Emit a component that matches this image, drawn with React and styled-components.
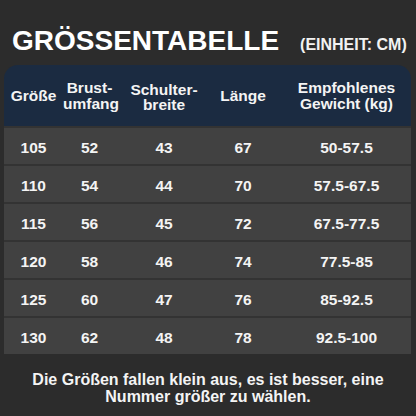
import React from 'react'
import styled, { createGlobalStyle } from 'styled-components';

const GlobalStyle = createGlobalStyle`
  html, body {
    margin: 0;
    padding: 0;
    background: #2c2c2c;
  }
  * { box-sizing: border-box; }
`;

const Page = styled.div`
  width: 416px;
  height: 416px;
  padding-top: 25px;
  background: #2c2c2c;
  color: #f4f4f4;
  font-family: "Liberation Sans", Arial, sans-serif;
  font-weight: bold;
  overflow: hidden;
`;

const TitleRow = styled.div`
  display: flex;
  align-items: baseline;
  gap: 21px;
  padding-left: 12px;
  height: 32px;
`;

const Title = styled.h1`
  margin: 0;
  font-size: 28px;
  line-height: 32px;
  font-weight: bold;
  color: #ffffff;
`;

const Unit = styled.span`
  font-size: 16px;
  color: #f2f2f2;
`;

const Table = styled.div`
  margin: 8px 5px 0 4px;
  display: flex;
  flex-direction: column;
`;

const Columns = styled.div`
  display: grid;
  grid-template-columns: 59px 53px 96px 62px 1fr;
  align-items: center;
  text-align: center;
  & > div:last-child {
    padding-left: 8px;
  }
`;

const Head = styled(Columns)`
  height: 61px;
  background: #1b2b41;
  border-radius: 14px 14px 0 0;
  font-size: 15.5px;
  line-height: 15.5px;
`;

const HeadCell = styled.div`
  padding-top: ${({ $drop }) => $drop || 0}px;
`;

const Row = styled(Columns)`
  height: 38px;
  padding-top: 3px;
  border-top: 2px solid #333333;
  background: #414141;
  font-size: 15.5px;
`;

const Note = styled.p`
  margin: 17px 0 0;
  text-align: center;
  font-size: 16px;
  line-height: 17px;
  color: #f4f4f4;
`;

const rows = [
  ['105', '52', '43', '67', '50-57.5'],
  ['110', '54', '44', '70', '57.5-67.5'],
  ['115', '56', '45', '72', '67.5-77.5'],
  ['120', '58', '46', '74', '77.5-85'],
  ['125', '60', '47', '76', '85-92.5'],
  ['130', '62', '48', '78', '92.5-100'],
];

const App = () => {
  return (
    <Page>
      <GlobalStyle />
      <TitleRow>
        <Title>GRÖSSENTABELLE</Title>
        <Unit>(EINHEIT: CM)</Unit>
      </TitleRow>
      <Table>
        <Head>
          <HeadCell>Größe</HeadCell>
          <HeadCell>Brust-<br />umfang</HeadCell>
          <HeadCell $drop={3}>Schulter-<br />breite</HeadCell>
          <HeadCell>Länge</HeadCell>
          <HeadCell>Empfohlenes<br />Gewicht (kg)</HeadCell>
        </Head>
        {rows.map((r) => (
          <Row key={r[0]}>
            {r.map((v, i) => (
              <div key={i}>{v}</div>
            ))}
          </Row>
        ))}
      </Table>
      <Note>
        Die Größen fallen klein aus, es ist besser, eine<br />
        Nummer größer zu wählen.
      </Note>
    </Page>
  )
}
export default App
